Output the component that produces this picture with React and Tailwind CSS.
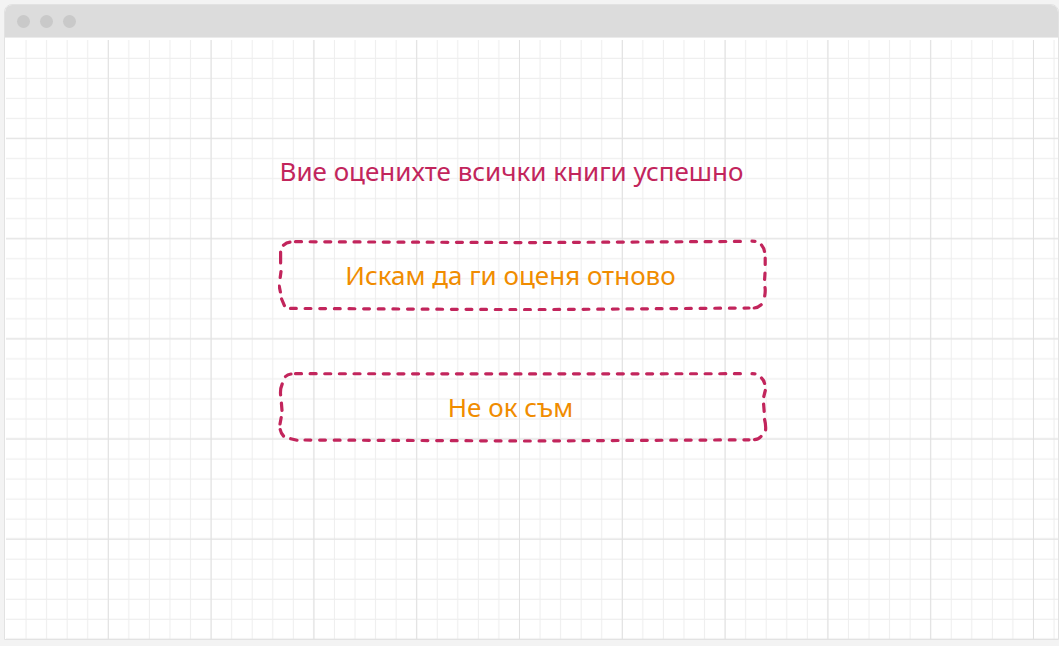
import React from 'react';

function GridBackground() {
  return (
    <svg className="absolute inset-0 h-full w-full" aria-hidden="true">
      <defs>
        <pattern id="minor" x="1" y="1" width="20.56" height="20.03" patternUnits="userSpaceOnUse">
          <path d="M20.06 0V20.03M0 19.5H20.56" fill="none" stroke="#eeeeee" strokeWidth="1.1" />
        </pattern>
        <pattern id="major" x="1" y="1" width="102.8" height="100.15" patternUnits="userSpaceOnUse">
          <path d="M102.3 0V100.15M0 99.5H102.8" fill="none" stroke="#e1e1e1" strokeWidth="1" />
        </pattern>
      </defs>
      <rect x="1" y="2" width="100%" height="100%" fill="url(#minor)" />
      <rect x="1" y="2" width="100%" height="100%" fill="url(#major)" />
    </svg>
  );
}

const OUTLINES = {
  first: {
    top: 'M17.5 2.7L250 3.6L470 2.4',
    bottom: 'M12.5 69.4L250 70.7L471 69',
    ends:
      'M5.5 6.2Q8.5 3.6 12 3.2M474 2.2L477 2.4M483.5 6Q486 9 486.5 12.5M487.2 19V25.5M487 34L486.6 40.5M487 48.5Q487.6 52 486.7 57M483.2 65.8Q480 68.7 476.2 69M2.6 13V24M3 32.5L2.2 38.5M1.2 47L2.4 53M3.6 60L6.4 66.6',
  },
  second: {
    top: 'M17.5 2.7L250 2.9L470 2.7',
    bottom: 'M27 69L250 70L471 68.8',
    ends:
      'M7.5 5.5Q9.5 3.4 13 3M474 2.7L477 2.8M483.5 7Q486.2 9.5 486.6 12.5M487.3 19.5L485.8 25.5M485.6 33L486.2 40.5M486.6 48.5Q488 54 487.6 59M483 65.5Q480.5 68.4 476.5 68.7M4.2 13Q2 18 2.6 24M3.4 32L4 39.5M3.2 46.5L2 53M2.2 58.5Q3 62.5 5.5 65M12.7 67.7L19 69.2',
  },
};

function SketchButton({ outline, children }) {
  const { top, bottom, ends } = OUTLINES[outline];
  return (
    <button
      type="button"
      className="relative flex h-[72px] w-full items-center justify-center pr-6 text-[26px] leading-8 text-[#f08c00]"
    >
      <svg
        className="absolute inset-0 h-full w-full"
        viewBox="0 0 490 72"
        preserveAspectRatio="none"
        fill="none"
        stroke="#c2255c"
        strokeWidth="3.2"
        strokeLinecap="round"
        aria-hidden="true"
      >
        <path d={top} strokeDasharray="6 8.63" />
        <path d={bottom} strokeDasharray="5.8 8.83" />
        <path d={ends} />
      </svg>
      <span className="relative">{children}</span>
    </button>
  );
}

export default function App() {
  return (
    <div className="flex min-h-screen flex-col bg-[#f3f3f3] pt-1 pb-1.5 pl-1 font-['Noto_Sans',sans-serif]">
      <div className="flex flex-1 flex-col overflow-hidden rounded-t-lg border border-[#e2e2e2] bg-white">
        <header className="flex h-8 shrink-0 items-center gap-2.5 bg-[#dcdcdc] px-3">
          <span className="size-[13px] rounded-full bg-[#c9c9c9]" />
          <span className="size-[13px] rounded-full bg-[#c9c9c9]" />
          <span className="size-[13px] rounded-full bg-[#c9c9c9]" />
        </header>
        <main className="relative flex flex-1 justify-center border-t border-[#ebebeb] pt-[117px] pr-[18px]">
          <GridBackground />
          <div className="relative flex w-[490px] max-w-full flex-col">
            <h1 className="pl-0.5 text-[26px] leading-8 whitespace-nowrap text-[#c2255c]">
              Вие оценихте всички книги успешно
            </h1>
            <div className="mt-[52px] flex flex-col gap-[60px]">
              <SketchButton outline="first">Искам да ги оценя отново</SketchButton>
              <SketchButton outline="second">Не ок съм</SketchButton>
            </div>
          </div>
        </main>
      </div>
    </div>
  );
}
